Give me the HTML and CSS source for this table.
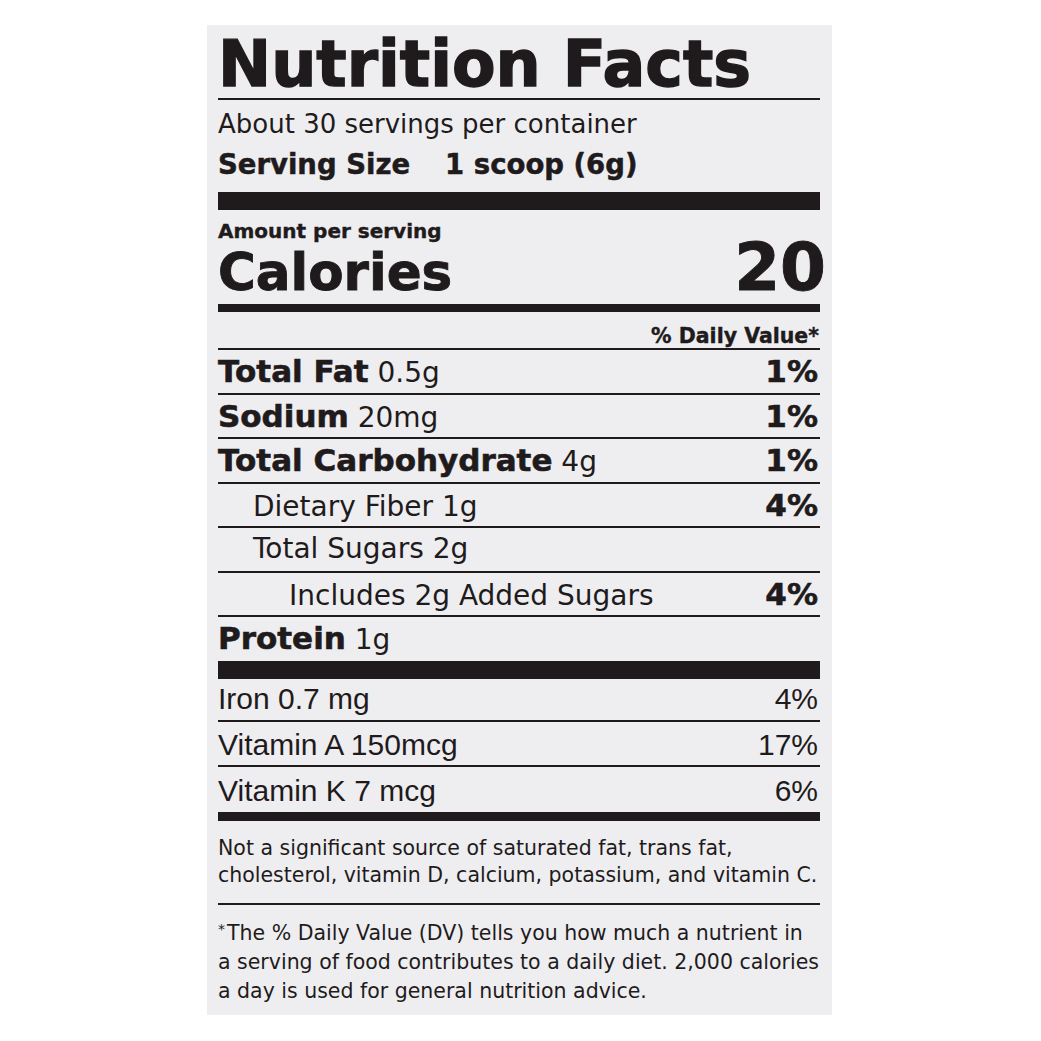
FILE: index.html
```html
<!DOCTYPE html>
<html lang="en">

<head>
    <meta charset="UTF-8">
    <meta name="viewport" content="width=device-width, initial-scale=1.0">
    <title>Nutrition Facts</title>
    <link rel="stylesheet" href="styles.css">
</head>

<body>
    <div class="label">
        <h1 class="title">Nutrition Facts</h1>
        <div class="rule"></div>
        <p class="perContainer">About 30 servings per container</p>
        <p class="servingSize">Serving Size<span class="sizeValue">1 scoop (6g)</span></p>
        <div class="bar thick"></div>

        <p class="amount">Amount per serving</p>
        <div class="calRow">
            <span class="calLabel">Calories</span>
            <span class="calValue">20</span>
        </div>
        <div class="bar medium"></div>

        <p class="dvHead">% Daily Value*</p>
        <div class="nutrients">
            <div class="row"><span><b>Total Fat</b> 0.5g</span><b class="pct">1%</b></div>
            <div class="row"><span><b>Sodium</b> 20mg</span><b class="pct">1%</b></div>
            <div class="row"><span><b>Total Carbohydrate</b> 4g</span><b class="pct">1%</b></div>
            <div class="row sub"><span>Dietary Fiber 1g</span><b class="pct">4%</b></div>
            <div class="row sub"><span>Total Sugars 2g</span></div>
            <div class="row subsub"><span>Includes 2g Added Sugars</span><b class="pct">4%</b></div>
            <div class="row"><span><b>Protein</b> 1g</span></div>
        </div>
        <div class="bar thick protBar"></div>

        <div class="vitamins">
            <div class="vit first"><span>Iron 0.7 mg</span><span>4%</span></div>
            <div class="vit"><span>Vitamin A 150mcg</span><span>17%</span></div>
            <div class="vit last"><span>Vitamin K 7 mcg</span><span>6%</span></div>
        </div>
        <div class="bar medium endBar"></div>

        <p class="note">Not a significant source of saturated fat, trans fat,<br>cholesterol, vitamin D, calcium, potassium, and vitamin C.</p>
        <div class="rule noteRule"></div>
        <p class="footnote"><span class="star">*</span>The % Daily Value (DV) tells you how much a nutrient in<br>a serving of food contributes to a daily diet. 2,000 calories<br>a day is used for general nutrition advice.</p>
    </div>
</body>

</html>
```

FILE: styles.css
```css
body {
    margin: 0;
    background: #ffffff;
}

.label {
    box-sizing: border-box;
    width: 625px;
    height: 990px;
    margin: 25px 0 0 207px;
    padding: 8px 12px 0 11px;
    background: #eeeef0;
    color: #1f1b1c;
    font-family: "DejaVu Sans", sans-serif;
}

p {
    margin: 0;
}

.title {
    margin: 0;
    font-size: 63.5px;
    line-height: 63px;
    font-weight: bold;
    -webkit-text-stroke: 1.4px #1f1b1c;
    white-space: nowrap;
}

.rule {
    border-top: 2px solid #1f1b1c;
    margin-top: 2px;
}

.perContainer {
    margin-top: 10px;
    font-size: 26px;
    line-height: 28px;
}

.servingSize {
    margin-top: 12px;
    font-size: 27.5px;
    line-height: 28px;
    font-weight: bold;
    -webkit-text-stroke: 0.5px #1f1b1c;
}

.sizeValue {
    margin-left: 35px;
}

.bar {
    background: #1f1b1c;
}

.thick {
    height: 18px;
    margin-top: 14px;
}

.medium {
    height: 8px;
    margin-top: 6px;
}

.amount {
    margin-top: 11px;
    font-size: 20px;
    line-height: 20px;
    font-weight: bold;
    -webkit-text-stroke: 0.4px #1f1b1c;
}

.calRow {
    display: flex;
    justify-content: space-between;
    align-items: baseline;
    margin-top: 3px;
    font-weight: bold;
    -webkit-text-stroke: 0.9px #1f1b1c;
}

.calLabel {
    font-size: 51.5px;
    line-height: 52px;
}

.calValue {
    font-size: 66px;
    line-height: 48px;
    margin-right: -6px;
}

.dvHead {
    margin-top: 13px;
    font-size: 20.5px;
    line-height: 22px;
    font-weight: bold;
    text-align: right;
    padding-right: 1px;
    -webkit-text-stroke: 0.4px #1f1b1c;
}

.nutrients {
    margin-top: 1px;
}

.row {
    box-sizing: border-box;
    display: flex;
    justify-content: space-between;
    align-items: baseline;
    height: 44.5px;
    border-top: 2px solid #1f1b1c;
    font-size: 28px;
    line-height: 42.5px;
    white-space: nowrap;
}

.row b {
    font-size: 31px;
    -webkit-text-stroke: 0.6px #1f1b1c;
}

.pct {
    padding-right: 2px;
}

.sub {
    padding-left: 35px;
}

.subsub {
    padding-left: 71px;
}

.protBar {
    margin-top: 1.5px;
}

.vit {
    display: flex;
    justify-content: space-between;
    font-family: "Liberation Sans", sans-serif;
    font-size: 30px;
    line-height: 40px;
    padding-right: 2px;
    border-bottom: 2px solid #1f1b1c;
}

.vit.first {
    height: 41px;
}

.vit:nth-child(2) {
    padding-top: 3px;
}

.vit.last {
    padding-top: 4px;
    border-bottom: none;
}

.endBar {
    height: 9px;
    margin-top: 1px;
}

.note {
    margin-top: 14px;
    font-size: 20.5px;
    line-height: 27px;
    white-space: nowrap;
}

.noteRule {
    margin-top: 14px;
}

.footnote {
    margin-top: 10px;
    font-size: 20.5px;
    line-height: 29px;
    white-space: nowrap;
}

.star {
    font-size: 14px;
    vertical-align: 6px;
    margin-right: 2px;
}
```
